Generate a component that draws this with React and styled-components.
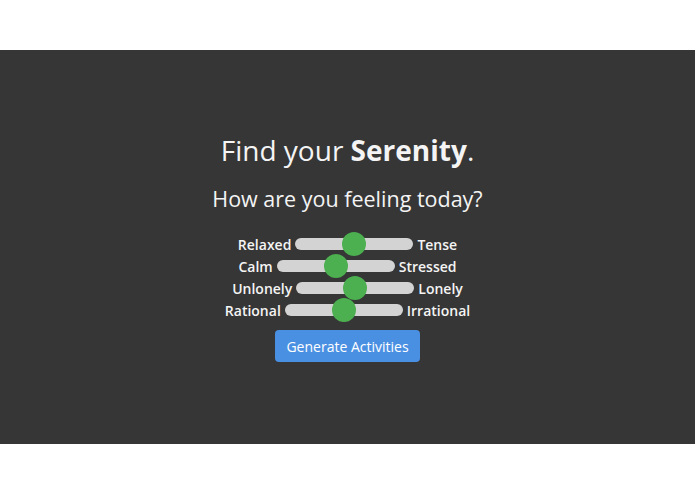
import React from "react";
import styled, { createGlobalStyle } from "styled-components";

const GlobalStyle = createGlobalStyle`
  body {
    margin: 0;
    background: #ffffff;
    font-family: 'Open Sans', 'Noto Sans', sans-serif;
  }
`;

const Page = styled.div`
  padding-top: 50px;
`;

const Panel = styled.section`
  background-color: #363636;
  height: 394px;
  box-sizing: border-box;
  padding-top: 82px;
  display: flex;
  flex-direction: column;
  align-items: center;
  color: #f4f4f4;
`;

const Title = styled.h1`
  margin: 0;
  font-size: 28px;
  font-weight: 400;
  line-height: 36px;

  b {
    font-weight: 700;
  }
`;

const Subtitle = styled.h2`
  margin: 16px 0 0;
  font-size: 21.5px;
  font-weight: 400;
  line-height: 30px;
`;

const Sliders = styled.div`
  margin-top: 19px;
  display: flex;
  flex-direction: column;
  align-items: center;
`;

const Row = styled.div`
  display: flex;
  align-items: center;
  justify-content: center;
  gap: 4px;
  height: 22px;
`;

const Label = styled.span`
  font-size: 14px;
  font-weight: 600;
  color: #f4f4f4;
`;

const Range = styled.input.attrs({ type: "range", min: 0, max: 100 })`
  -webkit-appearance: none;
  appearance: none;
  margin: 0;
  width: 118px;
  height: 12px;
  border-radius: 6px;
  background: #d3d3d3;
  outline: none;

  &::-webkit-slider-thumb {
    -webkit-appearance: none;
    appearance: none;
    width: 24px;
    height: 24px;
    border-radius: 50%;
    background: #4caf50;
    cursor: pointer;
  }

  &::-moz-range-thumb {
    width: 24px;
    height: 24px;
    border: none;
    border-radius: 50%;
    background: #4caf50;
    cursor: pointer;
  }
`;

const Button = styled.button`
  margin-top: 9px;
  height: 32px;
  padding: 0 11px;
  border: none;
  border-radius: 4px;
  background-color: #4a90e2;
  color: #ffffff;
  font-family: inherit;
  font-size: 14px;
  cursor: pointer;
`;

const moods = [
  ["Relaxed", "Tense"],
  ["Calm", "Stressed"],
  ["Unlonely", "Lonely"],
  ["Rational", "Irrational"],
];

export default function App() {
  return (
    <Page>
      <GlobalStyle />
      <Panel>
        <Title>
          Find your <b>Serenity</b>.
        </Title>
        <Subtitle>How are you feeling today?</Subtitle>
        <Sliders>
          {moods.map(([low, high]) => (
            <Row key={low}>
              <Label>{low}</Label>
              <Range defaultValue={50} />
              <Label>{high}</Label>
            </Row>
          ))}
        </Sliders>
        <Button>Generate Activities</Button>
      </Panel>
    </Page>
  );
}
